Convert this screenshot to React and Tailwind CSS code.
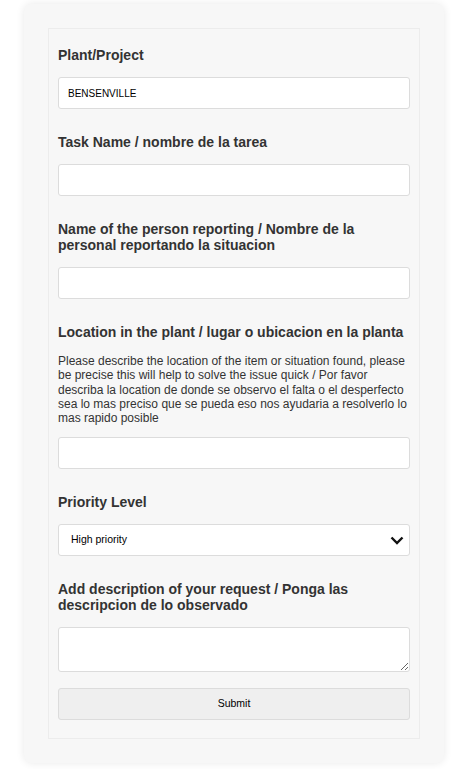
import React from 'react';

const font = { fontFamily: '"Liberation Sans", Arial, sans-serif' };

const Label = ({ children, className = '' }) => (
  <div className={`text-[14px] leading-[16px] font-bold text-[#333] mb-[14px] ${className}`}>{children}</div>
);

const TextInput = ({ value = '' }) => (
  <input
    type="text"
    defaultValue={value}
    className="block w-full h-[32px] bg-white border border-[#dcdcdc] rounded-[3px] pl-[9px] text-[10px] text-black outline-none"
  />
);

export default function App() {
  return (
    <div className="min-h-screen bg-white pt-[4px] pl-[24px]" style={font}>
      <div className="w-[420px] rounded-lg bg-[#f7f7f7] shadow-[0_0_8px_rgba(0,0,0,0.09)] p-[24px]">
        <form className="border border-[#ececec] px-[9px] pt-[18px] pb-[18px]" onSubmit={e => e.preventDefault()}>
          {/* Plant */}
          <div className="mb-[25px]">
            <Label>Plant/Project</Label>
            <TextInput value="BENSENVILLE" />
          </div>

          {/* Task */}
          <div className="mb-[25px]">
            <Label>Task Name / nombre de la tarea</Label>
            <TextInput />
          </div>

          {/* Reporter */}
          <div className="mb-[25px]">
            <Label>Name of the person reporting / Nombre de la personal reportando la situacion</Label>
            <TextInput />
          </div>

          {/* Location */}
          <div className="mb-[25px]">
            <Label>Location in the plant / lugar o ubicacion en la planta</Label>
            <p className="text-[12px] leading-[14.25px] text-[#333] mb-[12px]">
              Please describe the location of the item or situation found, please be precise this will help to solve the issue quick / Por favor describa la location de donde se observo el falta o el desperfecto sea lo mas preciso que se pueda eso nos ayudaria a resolverlo lo mas rapido posible
            </p>
            <TextInput />
          </div>

          {/* Priority */}
          <div className="mb-[25px]">
            <Label>Priority Level</Label>
            <div className="relative">
              <select
                defaultValue="high"
                className="block w-full h-[32px] appearance-none bg-white border border-[#dcdcdc] rounded-[3px] pl-[12px] text-[10.5px] text-black outline-none"
              >
                <option value="high">High priority</option>
                <option value="medium">Medium priority</option>
                <option value="low">Low priority</option>
              </select>
              <svg
                className="absolute right-[6px] top-[12px] pointer-events-none"
                width="14"
                height="9"
                viewBox="0 0 14 9"
              >
                <polyline points="1.5,1.5 7,7 12.5,1.5" fill="none" stroke="#111" strokeWidth="2.4" />
              </svg>
            </div>
          </div>

          {/* Description */}
          <div className="mb-[16px]">
            <Label>Add description of your request / Ponga las descripcion de lo observado</Label>
            <textarea className="block w-full h-[45px] bg-white border border-[#dcdcdc] rounded-[3px] p-[8px] text-[10px] outline-none" />
          </div>

          <button
            type="submit"
            className="block w-full h-[32px] bg-[#efefef] border border-[#dcdcdc] rounded-[3px] text-[10.5px] text-black"
          >
            Submit
          </button>
        </form>
      </div>
    </div>
  );
}
